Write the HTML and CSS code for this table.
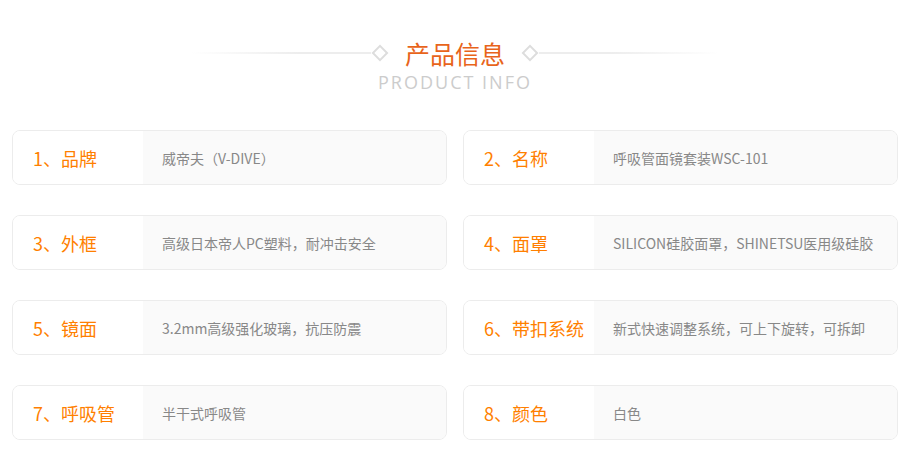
FILE: index.html
```html
<!DOCTYPE html>
<html lang="zh-CN">
<head>
<meta charset="utf-8">
<title>产品信息</title>
<link rel="stylesheet" href="styles.css">
</head>
<body>
<div class="page">
  <header class="head">
    <div class="title-row">
      <span class="line line-left"></span>
      <span class="diamond"></span>
      <h1 class="title">产品信息</h1>
      <span class="diamond"></span>
      <span class="line line-right"></span>
    </div>
    <div class="subtitle">PRODUCT INFO</div>
  </header>
  <div class="grid">
    <div class="card"><div class="label">1、品牌</div><div class="value">威帝夫（V-DIVE）</div></div>
    <div class="card"><div class="label">2、名称</div><div class="value">呼吸管面镜套装WSC-101</div></div>
    <div class="card"><div class="label">3、外框</div><div class="value">高级日本帝人PC塑料，耐冲击安全</div></div>
    <div class="card"><div class="label">4、面罩</div><div class="value">SILICON硅胶面罩，SHINETSU医用级硅胶</div></div>
    <div class="card"><div class="label">5、镜面</div><div class="value">3.2mm高级强化玻璃，抗压防震</div></div>
    <div class="card"><div class="label">6、带扣系统</div><div class="value">新式快速调整系统，可上下旋转，可拆卸</div></div>
    <div class="card"><div class="label">7、呼吸管</div><div class="value">半干式呼吸管</div></div>
    <div class="card"><div class="label">8、颜色</div><div class="value">白色</div></div>
  </div>
</div>
</body>
</html>
```

FILE: styles.css
```css
* { box-sizing: border-box; }
html, body { margin: 0; padding: 0; background: #fff; }
body { font-family: "Noto Sans CJK SC", "Noto Sans", sans-serif; }
.page { width: 910px; padding: 36px 12px 0 12px; }
.head { display: flex; flex-direction: column; align-items: center; }
.title-row { display: flex; align-items: center; width: 100%; justify-content: center; height: 34px; }
.line { height: 2px; width: 180px; }
.line-left { background: linear-gradient(to right, rgba(238,238,238,0), #ededed 60%); }
.line-right { background: linear-gradient(to left, rgba(238,238,238,0), #ededed 60%); }
.diamond { width: 12px; height: 12px; border: 2px solid #dddddd; transform: rotate(45deg); margin: 0 3px; }
.title { margin: 0 16px; font-size: 25px; font-weight: normal; color: #e8641b; line-height: 34px; }
.subtitle { font-family: "Open Sans", "Noto Sans", sans-serif; font-size: 18px; color: #cccccc; letter-spacing: 2px; line-height: 24px; margin-top: 0; }
.grid { display: grid; grid-template-columns: 435px 435px; column-gap: 16px; row-gap: 30px; margin-top: 36px; }
.card { display: flex; height: 55px; border: 1px solid #ececec; border-radius: 8px; overflow: hidden; }
.label { width: 130px; flex: none; background: #fff; display: flex; align-items: center; padding-left: 20px; font-size: 18px; color: #ff7f00; }
.value { flex: 1; background: #fafafa; display: flex; align-items: center; padding-left: 19px; font-size: 14px; color: #888888; white-space: nowrap; }
```
